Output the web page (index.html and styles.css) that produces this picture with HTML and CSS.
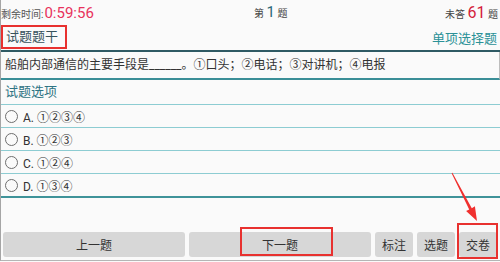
FILE: index.html
```html
<!DOCTYPE html>
<html lang="zh-CN">
<head>
    <meta charset="UTF-8">
    <meta name="viewport" content="width=device-width, initial-scale=1.0">
    <title>考试</title>
    <link rel="stylesheet" href="styles.css">
</head>
<body>
<div class="page">
    <!-- top status bar -->
    <div class="topbar">
        <div class="timer"><span class="timer-label">剩余时间:</span><span class="timer-value">0:59:56</span></div>
        <div class="qno">第 <span class="qno-num">1</span> 题</div>
        <div class="left-count">未答 <span class="left-num">61</span> 题</div>
    </div>

    <!-- question stem -->
    <div class="stem-head">
        <span class="stem-title">试题题干</span>
        <span class="stem-type">单项选择题</span>
    </div>
    <div class="stem">船舶内部通信的主要手段是______。①口头；②电话；③对讲机；④电报</div>

    <!-- options -->
    <div class="opt-head">试题选项</div>
    <ul class="options">
        <li><span class="radio"></span>A. ①②③④</li>
        <li><span class="radio"></span>B. ①②③</li>
        <li><span class="radio"></span>C. ①②④</li>
        <li><span class="radio"></span>D. ①③④</li>
    </ul>

    <div class="spacer"></div>

    <!-- bottom buttons -->
    <div class="toolbar">
        <button class="btn btn-wide">上一题</button>
        <button class="btn btn-wide">下一题</button>
        <button class="btn btn-small">标注</button>
        <button class="btn btn-small">选题</button>
        <button class="btn btn-small">交卷</button>
    </div>

    <!-- red marks drawn over the screen -->
    <div class="mark mark-next"></div>
    <div class="mark mark-submit"></div>
    <svg class="arrow" width="500" height="262" viewBox="0 0 500 262">
        <polygon points="451.6,173.2 452.4,172.8 471.8,208.2 474.9,206.3 477,221 466.1,210.9 469.2,209.6" fill="#f0302e"/>
    </svg>
</div>
</body>
</html>
```

FILE: styles.css
```css
body {
    margin: 0;
    background-color: #fafafa;
    font-family: Roboto, "Noto Sans CJK SC", sans-serif;
    color: #333;
}

.page {
    position: relative;
    height: 260px;
    display: flex;
    flex-direction: column;
    border-left: 1px solid #a5a5a5;
    border-bottom: 1px solid #b5b5b5;
    overflow: hidden;
}

/* Top bar */
.topbar {
    height: 24px;
    display: grid;
    grid-template-columns: 253px 1fr auto;
    align-items: center;
    white-space: nowrap;
}
.timer-label {
    font-size: 10px;
    color: #555;
}
.timer-value {
    font-size: 15px;
    color: #e8325c;
    margin-left: 1px;
}
.qno {
    font-size: 10px;
    color: #444;
}
.qno-num {
    font-size: 15px;
    color: #2c6878;
}
.left-count {
    font-size: 10px;
    color: #444;
    padding-right: 2px;
}
.left-num {
    font-size: 16px;
    color: #d41c3a;
}

/* Question stem */
.stem-head {
    height: 26px;
    display: flex;
    justify-content: space-between;
    align-items: center;
    border-bottom: 2px solid #2f5a64;
}
.stem-title {
    height: 20px;
    line-height: 20px;
    padding: 0 7px 0 3px;
    font-size: 13px;
    color: #37535c;
    border: 2px solid #e8312f;
}
.stem-type {
    font-size: 13px;
    color: #2b9197;
    padding-right: 3px;
}
.stem {
    height: 26px;
    line-height: 26px;
    padding-left: 4px;
    font-size: 12px;
    color: #333;
    white-space: nowrap;
    border-right: 1px solid #bdbdbd;
    border-bottom: 2px solid #3a8e97;
}

/* Options */
.opt-head {
    height: 24px;
    line-height: 24px;
    padding-left: 4px;
    font-size: 13px;
    color: #2e7483;
    border-bottom: 1px solid #8dccd2;
}
.options {
    list-style: none;
    margin: 0;
    padding: 0;
}
.options li {
    height: 22px;
    display: flex;
    align-items: center;
    gap: 5px;
    padding-left: 4px;
    font-size: 12px;
    color: #333;
    border-bottom: 1px solid #8dccd2;
}
.options li:last-child {
    border-bottom: 2px solid #3f9399;
}
.radio {
    width: 11px;
    height: 11px;
    border: 1.5px solid #6e6e6e;
    border-radius: 50%;
}

.spacer {
    flex: 1;
}

/* Bottom buttons */
.toolbar {
    display: flex;
    gap: 4px;
    padding: 0 3px 3px 2px;
}
.btn {
    height: 25px;
    border: none;
    border-radius: 3px;
    background-color: #d7d7d7;
    font-family: Roboto, "Noto Sans CJK SC", sans-serif;
    font-size: 12px;
    color: #333;
    padding: 0;
}
.btn-wide {
    flex: 1;
}
.btn-small {
    width: 38px;
}

/* Red annotation marks */
.mark {
    position: absolute;
    border: 2px solid #e8312f;
    box-sizing: border-box;
}
.mark-next {
    left: 239px;
    top: 227px;
    width: 93px;
    height: 29px;
}
.mark-submit {
    left: 456px;
    top: 223px;
    width: 41px;
    height: 36px;
}
.arrow {
    position: absolute;
    left: -1px;
    top: 0;
}
```
